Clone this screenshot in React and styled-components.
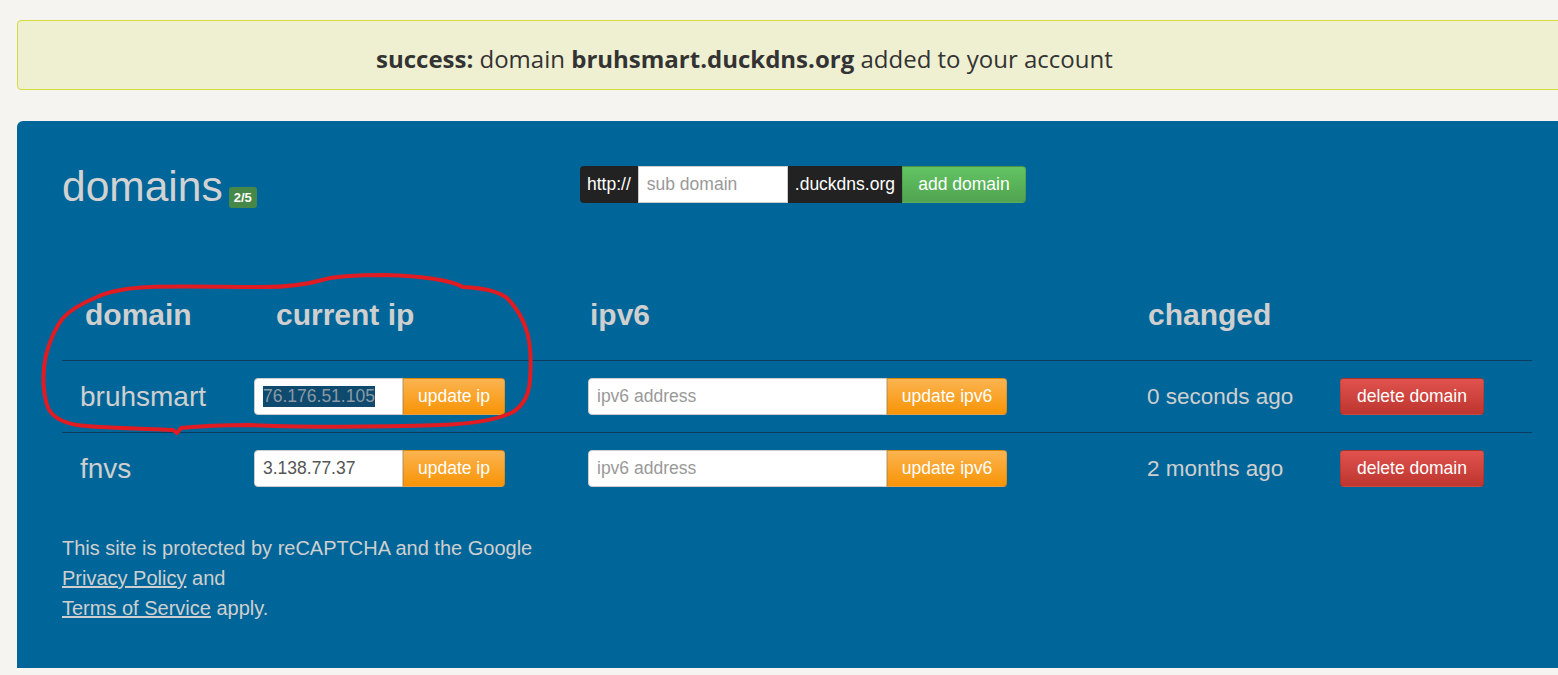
import React from "react";
import styled, { createGlobalStyle } from "styled-components";

const GlobalStyle = createGlobalStyle`
  html, body {
    margin: 0;
    padding: 0;
    background: #f5f4f0;
    overflow: hidden;
  }
  body {
    font-family: "Liberation Sans", Arial, sans-serif;
  }
`;

const Page = styled.div`
  position: relative;
  width: 1620px;
  padding: 20px 0 0 17px;
`;

const Alert = styled.div`
  box-sizing: border-box;
  height: 70px;
  display: flex;
  align-items: center;
  padding: 6px 0 0 358px;
  background: #eff0d2;
  border: 1px solid #d4dc3c;
  border-radius: 4px;
  font-family: "Open Sans", "Liberation Sans", sans-serif;
  font-size: 24px;
  color: #333;

  b {
    font-weight: 700;
  }
`;

const Panel = styled.div`
  margin-top: 31px;
  background: #006699;
  border-radius: 6px 0 0 0;
  padding: 44px 0 45px 45px;
  color: #cfcfcf;
`;

const TopBar = styled.div`
  display: flex;
  align-items: flex-start;
  height: 105px;
`;

const Title = styled.div`
  width: 518px;
  display: flex;
  align-items: flex-end;

  h1 {
    margin: 0;
    font-size: 42.5px;
    font-weight: 400;
    line-height: 44px;
    color: #d2d2d2;
  }
`;

const Badge = styled.span`
  margin: 0 0 1px 6px;
  background: #468847;
  color: #fff;
  font-size: 13px;
  font-weight: 700;
  line-height: 21px;
  padding: 0 5px;
  border-radius: 3px;
`;

const AddGroup = styled.div`
  display: flex;
  height: 37px;
  margin-top: 1px;
  font-size: 17.5px;
`;

const Addon = styled.span`
  display: flex;
  align-items: center;
  padding: 0 7px;
  background: #222;
  color: #fff;
  border-radius: ${(p) => (p.$first ? "4px 0 0 4px" : "0")};
`;

const Field = styled.input`
  box-sizing: border-box;
  width: ${(p) => p.$w}px;
  height: 37px;
  margin: 0;
  border: 1px solid #ccc;
  border-radius: ${(p) => (p.$square ? "0" : "4px 0 0 4px")};
  padding: 0 8px;
  font-family: "Liberation Sans", Arial, sans-serif;
  font-size: 17.5px;
  color: #555;
  background: #fff;
  outline: none;

  &::placeholder {
    color: #999;
  }
  &::selection {
    background: #0d4a6e;
    color: #8a9aa6;
  }
`;

const Button = styled.button`
  box-sizing: border-box;
  height: 37px;
  width: ${(p) => p.$w}px;
  margin: 0;
  padding: 0;
  border: 1px solid rgba(0, 0, 0, 0.1);
  border-radius: ${(p) => (p.$joined ? "0 4px 4px 0" : "4px")};
  font-family: "Liberation Sans", Arial, sans-serif;
  font-size: 17.5px;
  color: #fff;
  cursor: pointer;
  background: ${(p) =>
    p.$kind === "green"
      ? "linear-gradient(#62c462, #51a351)"
      : p.$kind === "red"
      ? "linear-gradient(#e0524d, #bd362f)"
      : "linear-gradient(#fbb450, #f89406)"};
`;

const Grid = styled.div`
  display: grid;
  grid-template-columns: 174px 334px 559px 193px 210px;
  width: 1470px;
`;

const HeadRow = styled(Grid)`
  height: 90px;
  align-items: center;
  border-bottom: 1px solid #0b3d60;
`;

const HeadCell = styled.div`
  padding-left: ${(p) => p.$indent}px;
  font-size: 30px;
  font-weight: 700;
  color: #cfcfcf;
`;

const Row = styled(Grid)`
  height: 71px;
  align-items: center;
  border-bottom: ${(p) => (p.$last ? "none" : "1px solid #0b3d60")};
`;

const Cell = styled.div`
  display: flex;
  align-items: center;
  padding-left: 18px;
  font-size: ${(p) => p.$size || 22.5}px;
  color: #cfcfcf;
`;

const Footer = styled.p`
  margin: 29px 0 0;
  font-size: 20px;
  line-height: 30px;
  color: #cfcfcf;

  a {
    color: #cfcfcf;
    text-decoration: underline;
  }
`;

const Scribble = styled.svg`
  position: absolute;
  left: 0;
  top: 0;
  pointer-events: none;
`;

const rows = [
  { name: "bruhsmart", ip: "76.176.51.105", changed: "0 seconds ago" },
  { name: "fnvs", ip: "3.138.77.37", changed: "2 months ago" },
];

function DomainRow({ row, last }) {
  const ipRef = React.useRef(null);
  React.useEffect(() => {
    if (row.name === "bruhsmart" && ipRef.current) {
      ipRef.current.focus();
      ipRef.current.select();
    }
  }, [row.name]);
  return (
    <Row $last={last}>
      <Cell $size={28}>{row.name}</Cell>
      <Cell>
        <Field ref={ipRef} $w={149} defaultValue={row.ip} />
        <Button $w={102} $joined>update ip</Button>
      </Cell>
      <Cell>
        <Field $w={299} placeholder="ipv6 address" />
        <Button $w={120} $joined>update ipv6</Button>
      </Cell>
      <Cell>{row.changed}</Cell>
      <Cell>
        <Button $w={144} $kind="red">delete domain</Button>
      </Cell>
    </Row>
  );
}

export default function App() {
  return (
    <Page>
      <GlobalStyle />
      <Alert>
        <span>
          <b>success:</b> domain <b>bruhsmart.duckdns.org</b> added to your account
        </span>
      </Alert>
      <Panel>
        <TopBar>
          <Title>
            <h1>domains</h1>
            <Badge>2/5</Badge>
          </Title>
          <AddGroup>
            <Addon $first>http://</Addon>
            <Field $w={150} $square placeholder="sub domain" />
            <Addon>.duckdns.org</Addon>
            <Button $w={124} $kind="green" $joined>add domain</Button>
          </AddGroup>
        </TopBar>
        <HeadRow>
          <HeadCell $indent={23}>domain</HeadCell>
          <HeadCell $indent={40}>current ip</HeadCell>
          <HeadCell $indent={20}>ipv6</HeadCell>
          <HeadCell $indent={19}>changed</HeadCell>
          <HeadCell $indent={0} />
        </HeadRow>
        {rows.map((r, i) => (
          <DomainRow key={r.name} row={r} last={i === rows.length - 1} />
        ))}
        <Footer>
          This site is protected by reCAPTCHA and the Google
          <br />
          <a href="#privacy">Privacy Policy</a> and
          <br />
          <a href="#terms">Terms of Service</a> apply.
        </Footer>
      </Panel>
      <Scribble width="1558" height="675" viewBox="0 0 1558 675">
        <path
          d="M463 287 C 450 280, 420 276, 385 275 C 355 275, 335 276, 322 280 C 305 285, 285 287, 263 287 C 220 287, 180 286, 150 287 C 125 288, 108 292, 97 297 C 85 302, 72 308, 63 318 C 55 328, 50 340, 46 355 C 42 372, 43 392, 47 405 C 50 415, 60 422, 77 425 C 100 428, 130 428, 173 430 L 177 433 L 181 428 C 200 426, 220 425, 250 425 C 300 427, 380 427, 440 425 C 470 424, 495 421, 513 412 C 524 405, 529 395, 530 380 C 531 365, 531 345, 527 332 C 523 318, 517 308, 507 298 C 498 291, 485 288, 463 287"
          fill="none"
          stroke="#e01b22"
          strokeWidth="4"
          strokeLinecap="round"
          strokeLinejoin="round"
        />
      </Scribble>
    </Page>
  );
}
